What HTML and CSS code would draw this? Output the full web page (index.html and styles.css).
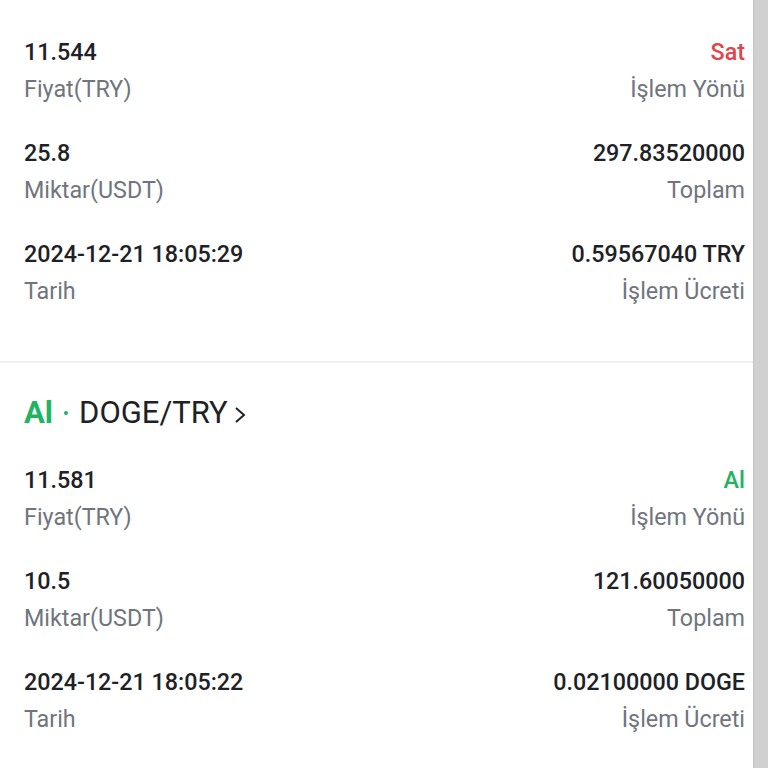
FILE: index.html
```html
<!DOCTYPE html>
<html lang="tr">
<head>
<meta charset="utf-8">
<link rel="stylesheet" href="styles.css">
</head>
<body>
<div class="screen">
  <div class="content">
    <section class="trade first">
      <div class="row">
        <div class="cell"><div class="val">11.544</div><div class="lbl">Fiyat(TRY)</div></div>
        <div class="cell end"><div class="val sell">Sat</div><div class="lbl">İşlem Yönü</div></div>
      </div>
      <div class="row">
        <div class="cell"><div class="val">25.8</div><div class="lbl">Miktar(USDT)</div></div>
        <div class="cell end"><div class="val">297.83520000</div><div class="lbl">Toplam</div></div>
      </div>
      <div class="row">
        <div class="cell"><div class="val">2024-12-21 18:05:29</div><div class="lbl">Tarih</div></div>
        <div class="cell end"><div class="val">0.59567040 TRY</div><div class="lbl">İşlem Ücreti</div></div>
      </div>
    </section>
    <div class="divider"></div>
    <section class="trade">
      <div class="title"><span class="side buy">Al</span><span class="dot"></span><span class="pair">DOGE/TRY</span><svg class="chev" width="14" height="20" viewBox="0 0 14 20"><polyline points="3,3 11,10 3,17" fill="none" stroke="#1e2126" stroke-width="2"/></svg></div>
      <div class="row">
        <div class="cell"><div class="val">11.581</div><div class="lbl">Fiyat(TRY)</div></div>
        <div class="cell end"><div class="val buy">Al</div><div class="lbl">İşlem Yönü</div></div>
      </div>
      <div class="row">
        <div class="cell"><div class="val">10.5</div><div class="lbl">Miktar(USDT)</div></div>
        <div class="cell end"><div class="val">121.60050000</div><div class="lbl">Toplam</div></div>
      </div>
      <div class="row">
        <div class="cell"><div class="val">2024-12-21 18:05:22</div><div class="lbl">Tarih</div></div>
        <div class="cell end"><div class="val">0.02100000 DOGE</div><div class="lbl">İşlem Ücreti</div></div>
      </div>
    </section>
  </div>
  <div class="scrollbar"></div>
</div>
</body>
</html>
```
FILE: styles.css
```css
html, body {
  margin: 0;
  padding: 0;
  background: #ffffff;
}
body {
  font-family: Roboto, "Liberation Sans", sans-serif;
  color: #1e2126;
}
.screen {
  display: flex;
  width: 768px;
  height: 768px;
  overflow: hidden;
}
.content {
  flex: 1;
  display: flex;
  flex-direction: column;
}
.trade {
  display: flex;
  flex-direction: column;
  gap: 27px;
  padding: 30px 8px 0 24px;
}
.trade.first {
  padding-top: 34px;
  padding-bottom: 51px;
}
.row {
  display: flex;
  justify-content: space-between;
}
.cell {
  display: flex;
  flex-direction: column;
}
.cell.end {
  align-items: flex-end;
}
.val {
  font-size: 23.3px;
  line-height: 37px;
  font-weight: 500;
  color: #1e2126;
}
.lbl {
  font-size: 23.3px;
  line-height: 37px;
  color: #70757d;
}
.sell { color: #e0464c; }
.buy { color: #1fb462; }
.divider {
  height: 2px;
  background: #f1f1f1;
}
.title {
  display: flex;
  align-items: center;
  font-size: 31px;
  line-height: 40px;
  margin-bottom: 2px;
}
.side {
  font-weight: 700;
}
.dot {
  width: 4px;
  height: 4px;
  border-radius: 50%;
  background: #1fb462;
  margin: 0 11px 0 11px;
}
.pair {
  color: #1e2126;
}
.chev {
  margin-left: 5px;
  margin-top: 4px;
}
.scrollbar {
  width: 14px;
  background: #d0d0d0;
  border-left: 1px solid #c4c4c4;
  flex-shrink: 0;
}
```
